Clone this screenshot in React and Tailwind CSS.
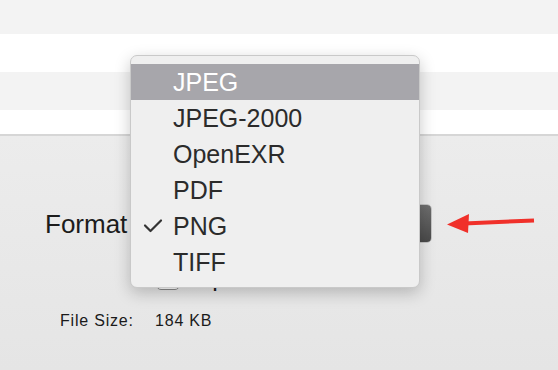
import React from "react";

const FORMATS = ["JPEG", "JPEG-2000", "OpenEXR", "PDF", "PNG", "TIFF"];

function Check() {
  return (
    <svg width="20" height="16" viewBox="0 0 20 16" className="absolute left-[12px] top-[10px]">
      <path d="M2 7.5 L7.5 13 L18 2.5" fill="none" stroke="#333" strokeWidth="2.2" strokeLinecap="round" strokeLinejoin="round" />
    </svg>
  );
}

function FormatMenu() {
  return (
    <div className="absolute left-[130px] top-[55px] w-[290px] h-[233px] rounded-[7px] bg-[#efefef] border border-[#c9c9c9] shadow-[0_5px_16px_rgba(0,0,0,0.22)] pt-[8px] overflow-hidden">
      {FORMATS.map((f, i) => (
        <div
          key={f}
          className={`relative h-[36px] flex items-center pl-[42px] text-[25px] leading-none ${
            i === 0 ? "bg-[#a7a6ab] text-white" : "text-[#2b2b2b]"
          }`}
        >
          {f === "PNG" && <Check />}
          {f}
        </div>
      ))}
    </div>
  );
}

function Arrow() {
  return (
    <svg width="100" height="30" viewBox="0 0 100 30" className="absolute left-[440px] top-[206px]">
      <line x1="24" y1="17.5" x2="94" y2="14.5" stroke="#f0302a" strokeWidth="4" />
      <polygon points="7,18.5 29,8 28,27" fill="#f0302a" />
    </svg>
  );
}

export default function App() {
  return (
    <div className="relative w-[558px] h-[370px] overflow-hidden font-['Liberation_Sans',Arial,sans-serif]">
      {/* striped file list */}
      <div className="flex flex-col">
        <div className="h-[34px] bg-[#f3f3f3]" />
        <div className="h-[38px] bg-white" />
        <div className="h-[38px] bg-[#f3f3f3]" />
        <div className="h-[24px] bg-white" />
        <div className="h-[2px] bg-[#d6d6d6]" />
      </div>

      {/* options panel */}
      <div className="flex flex-col h-[234px] bg-gradient-to-b from-[#ececec] to-[#e5e5e5] pl-[45px] pt-[68px]">
        <div className="flex items-center h-[39px]">
          <span className="w-[95px] text-[26px] text-[#1c1c1c] leading-none">Format</span>
          <div className="w-[292px] h-[39px] rounded-[5px] bg-white border border-[#c4c4c4] flex justify-end overflow-hidden">
            <div className="w-[30px] h-full bg-gradient-to-b from-[#6e6e6e] to-[#4a4a4a] flex items-center justify-center">
              <svg width="10" height="20" viewBox="0 0 10 20">
                <path d="M2 7 L5 3.5 L8 7 M2 13 L5 16.5 L8 13" fill="none" stroke="#e6e6e6" strokeWidth="1.6" />
              </svg>
            </div>
          </div>
        </div>

        <div className="flex items-center mt-[22px] pl-[111px]">
          <div className="w-[24px] h-[24px] rounded-[5px] bg-white border border-[#8a8a8a]" />
          <span className="ml-[10px] text-[25px] text-[#1c1c1c] leading-none">Alpha</span>
        </div>

        <div className="flex items-baseline mt-[19px] pl-[15px] text-[16px] tracking-[0.8px] text-[#1a1a1a]">
          <span className="w-[95px]">File Size:</span>
          <span>184 KB</span>
        </div>
      </div>

      <FormatMenu />
      <Arrow />
    </div>
  );
}
